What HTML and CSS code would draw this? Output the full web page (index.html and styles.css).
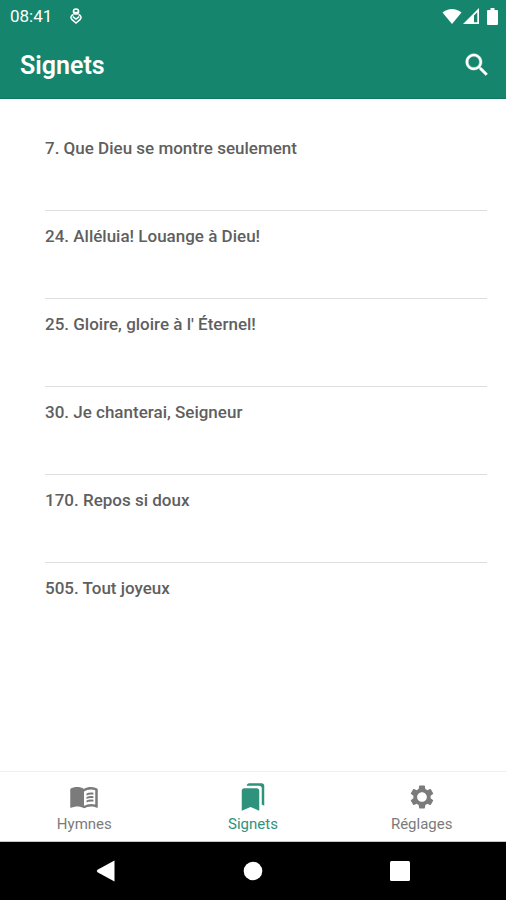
FILE: index.html
```html
<!DOCTYPE html>
<html lang="fr">
<head>
<meta charset="utf-8">
<meta name="viewport" content="width=device-width, initial-scale=1">
<title>Signets</title>
<link rel="stylesheet" href="styles.css">
</head>
<body>
<div class="app">
  <header class="header">
    <div class="status">
      <span class="clock">08:41</span>
      <svg class="status-app" width="12" height="16" viewBox="0 0 12 16" fill="none" stroke="currentColor" stroke-width="1.5">
        <circle cx="6" cy="3.500" r="2.600"/>
        <path d="M3.500 6.500C1 7.500.3 9.500 1.800 11.400L6 15l4.200-3.600C11.700 9.500 11 7.500 8.500 6.500M2.800 8.600L6 11 9.200 8.600M4 3.800L6 5 8 3.800"/>
      </svg>
      <div class="status-right">
        <svg width="20" height="16" viewBox="0 0 20 16" fill="currentColor"><path d="M.5 4.500C6-.2 14-.2 19.500 4.500L10 16z"/></svg>
        <svg width="16" height="16" viewBox="0 0 16 16" fill="currentColor"><path fill-rule="evenodd" d="M0 16L16 0V16zM11 7.500L14.300 4.200V14.300H11z"/></svg>
        <svg class="battery" width="11" height="17" viewBox="0 0 11 17" fill="currentColor"><path d="M3.500 0h4v2H10q1 0 1 1v13q0 1-1 1H1q-1 0-1-1V3q0-1 1-1h2.500z"/></svg>
      </div>
    </div>
    <div class="toolbar">
      <h1 class="title">Signets</h1>
      <button class="icon-button" type="button" aria-label="Rechercher">
        <svg width="30" height="30" viewBox="0 0 24 24" fill="currentColor" stroke="currentColor" stroke-width=".3"><path d="M15.500 14h-.79l-.28-.27C15.410 12.590 16 11.110 16 9.500 16 5.910 13.090 3 9.500 3S3 5.910 3 9.500 5.910 16 9.500 16c1.610 0 3.090-.59 4.230-1.570l.27.28v.79l5 4.990L20.490 19l-4.990-5zm-6 0C7.010 14 5 11.990 5 9.500S7.010 5 9.500 5 14 7.010 14 9.500 11.990 14 9.500 14z"/></svg>
      </button>
    </div>
  </header>

  <main class="content">
    <ul class="hymns">
      <li class="hymn"><a href="#7">7. Que Dieu se montre seulement</a></li>
      <li class="hymn"><a href="#24">24. Alléluia! Louange à Dieu!</a></li>
      <li class="hymn"><a href="#25">25. Gloire, gloire à l' Éternel!</a></li>
      <li class="hymn"><a href="#30">30. Je chanterai, Seigneur</a></li>
      <li class="hymn"><a href="#170">170. Repos si doux</a></li>
      <li class="hymn"><a href="#505">505. Tout joyeux</a></li>
    </ul>
  </main>

  <nav class="tabs">
    <a class="tab" href="#hymnes">
      <svg width="30" height="30" viewBox="0 0 24 24" fill="currentColor"><path d="M21 5c-1.110-.35-2.330-.5-3.500-.5-1.950 0-4.050.4-5.500 1.500-1.450-1.100-3.550-1.500-5.500-1.500S2.450 4.900 1 6v14.650c0 .25.25.5.5.5.1 0 .15-.05.25-.05C3.100 20.450 5.050 20 6.500 20c1.950 0 4.050.4 5.500 1.500 1.350-.85 3.800-1.500 5.500-1.500 1.650 0 3.350.3 4.750 1.050.1.050.15.050.25.050.25 0 .5-.25.5-.5V6c-.6-.45-1.250-.75-2-1zm0 13.500c-1.100-.35-2.300-.5-3.500-.5-1.700 0-4.150.65-5.500 1.500V8c1.350-.85 3.800-1.500 5.500-1.500 1.200 0 2.400.15 3.500.5v11.500z" transform="translate(0 -.5)"/><path d="M14 9.200c1.500-.7 3.300-.9 5.500-.6v1.500c-2-.3-3.900-.1-5.500.6zM14 12c1.500-.7 3.300-.9 5.500-.6v1.500c-2-.3-3.900-.1-5.500.6zM14 14.800c1.500-.7 3.300-.9 5.500-.6v1.500c-2-.3-3.900-.1-5.500.6z"/></svg>
      <span>Hymnes</span>
    </a>
    <a class="tab tab-active" href="#signets" aria-current="page">
      <svg width="30" height="30" viewBox="0 0 24 24" fill="currentColor"><path d="M19 18l2 1V3c0-1.100-.9-2-2-2H8.990C7.890 1 7 1.900 7 3h10c1.100 0 2 .9 2 2v13zM15 5H5c-1.100 0-2 .9-2 2v16l7-3 7 3V7c0-1.100-.9-2-2-2z"/></svg>
      <span>Signets</span>
    </a>
    <a class="tab" href="#reglages">
      <svg width="30" height="30" viewBox="-1 -1 26 26" fill="currentColor"><path d="M19.430 12.980c.04-.32.07-.64.07-.98s-.03-.66-.07-.98l2.110-1.650c.19-.15.24-.42.12-.64l-2-3.460c-.12-.22-.39-.3-.61-.22l-2.490 1c-.52-.4-1.080-.73-1.690-.98l-.38-2.650C14.460 2.180 14.250 2 14 2h-4c-.25 0-.46.18-.49.42l-.38 2.650c-.61.25-1.170.59-1.690.98l-2.490-1c-.23-.09-.49 0-.61.22l-2 3.460c-.13.22-.07.49.12.64l2.110 1.650c-.04.32-.07.65-.07.98s.03.66.07.98l-2.110 1.650c-.19.15-.24.42-.12.64l2 3.460c.12.22.39.3.61.22l2.490-1c.52.4 1.080.73 1.690.98l.38 2.650c.03.24.24.42.49.42h4c.25 0 .46-.18.49-.42l.38-2.650c.61-.25 1.170-.59 1.690-.98l2.490 1c.23.09.49 0 .61-.22l2-3.460c.12-.22.07-.49-.12-.64l-2.110-1.650zM12 16.200c-2.320 0-4.200-1.880-4.200-4.200s1.880-4.200 4.200-4.200 4.200 1.880 4.200 4.200-1.880 4.200-4.200 4.200z"/></svg>
      <span>Réglages</span>
    </a>
  </nav>

  <div class="system">
    <button class="system-button" type="button" aria-label="Retour"><svg width="20" height="22" viewBox="0 0 20 22" fill="currentColor"><path d="M18.500.5V21.500L1.500 12.200Q0 11 1.500 9.800z"/></svg></button>
    <button class="system-button" type="button" aria-label="Accueil"><svg width="20" height="20" viewBox="0 0 20 20" fill="currentColor"><circle cx="10" cy="10" r="9.300"/></svg></button>
    <button class="system-button" type="button" aria-label="Applications récentes"><svg width="20" height="20" viewBox="0 0 20 20" fill="currentColor"><rect width="20" height="20" rx="1.500"/></svg></button>
  </div>
</div>
</body>
</html>
```
FILE: styles.css
```css
* {
  box-sizing: border-box;
}

body {
  margin: 0;
  background: #fff;
  font-family: Roboto, "Liberation Sans", sans-serif;
}

svg {
  display: block;
}

a {
  color: inherit;
  text-decoration: none;
}

button {
  display: flex;
  align-items: center;
  justify-content: center;
  padding: 0;
  border: 0;
  background: none;
  color: inherit;
}

.app {
  display: flex;
  flex-direction: column;
  min-height: 100vh;
}

.header {
  background: #15866d;
  color: #fff;
  border-bottom: 1px solid #117660;
}

.status {
  display: flex;
  align-items: center;
  height: 32px;
  padding: 0 8px 0 10px;
}

.clock {
  font-size: 17px;
  line-height: 20px;
}

.status-app {
  margin-left: 18px;
}

.status-right {
  display: flex;
  align-items: center;
  gap: 1px;
  margin-left: auto;
}

.battery {
  margin-left: 7px;
}

.toolbar {
  display: flex;
  align-items: center;
  justify-content: space-between;
  height: 66px;
  padding: 0 14px 0 20px;
}

.title {
  margin: 0;
  padding-top: 2px;
  font-size: 25px;
  font-weight: 600;
  line-height: 32px;
}

.content {
  flex: 1;
  padding: 24px 19px 24px 45px;
}

.hymns {
  margin: 0;
  padding: 0;
  list-style: none;
}

.hymn {
  height: 88px;
  padding-top: 15px;
  border-bottom: 1px solid #dedede;
  color: #5f5f5f;
  font-size: 17px;
  font-weight: 500;
  line-height: 20px;
}

.hymn:last-child {
  border-bottom: 0;
}

.tabs {
  display: grid;
  grid-template-columns: repeat(3, 1fr);
  height: 71px;
  border-top: 1px solid #f0f0f0;
  border-bottom: 1px solid #c8c8c8;
}

.tab {
  display: flex;
  flex-direction: column;
  align-items: center;
  padding-top: 10px;
  color: #7b7b7b;
  font-size: 15px;
  line-height: 24px;
}

.tab-active {
  color: #2f927c;
}

.system {
  display: grid;
  grid-template-columns: repeat(3, 1fr);
  height: 58px;
  padding: 0 33px;
  background: #000;
  color: #fff;
}
```
